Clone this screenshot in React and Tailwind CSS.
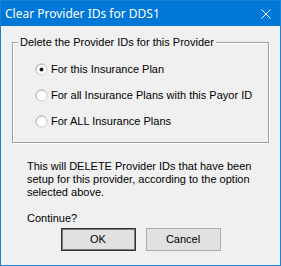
import React from "react";

function Radio({ checked }) {
  return (
    <svg width="13" height="13" viewBox="0 0 13 13" className="shrink-0">
      <defs>
        <linearGradient id="rg" x1="0" y1="0" x2="1" y2="1">
          <stop offset="0" stopColor="#8a8a8a" />
          <stop offset="1" stopColor="#dcdcdc" />
        </linearGradient>
      </defs>
      <circle cx="6.5" cy="6.5" r="5.5" fill="#ffffff" stroke="url(#rg)" strokeWidth="1" />
      {checked && <circle cx="6.5" cy="6.5" r="2" fill="#1a1a1a" />}
    </svg>
  );
}

export default function App() {
  const body = { fontFamily: '"Liberation Sans", Arial, sans-serif' };
  return (
    <div className="w-[281px] h-[266px] border border-[#1883d7] flex flex-col bg-[#f0f0f0]">
      <div
        className="h-[25px] bg-[#0078d7] flex items-center justify-between pl-[4px] pr-[9px] text-white text-[12px]"
        style={{ fontFamily: '"Noto Sans", sans-serif' }}
      >
        <span className="leading-none">Clear Provider IDs for DDS1</span>
        <svg width="10" height="10" viewBox="0 0 10 10">
          <path d="M0.5 0.5 L9.5 9.5 M9.5 0.5 L0.5 9.5" stroke="#ffffff" strokeWidth="1" />
        </svg>
      </div>
      <div className="flex-1 flex flex-col text-[11px] text-black" style={body}>
        <div className="relative ml-[11px] mt-[16px] w-[257px] h-[101px] border border-[#a0a0a0] shadow-[1px_1px_0_#ffffff,inset_1px_1px_0_#ffffff]">
          <span className="absolute -top-[7px] left-[5px] px-[2px] bg-[#f0f0f0] leading-[13px]">
            Delete the Provider IDs for this Provider
          </span>
          <div className="flex flex-col pt-[20px] pl-[22px] gap-[13px]">
            <div className="flex items-center h-[13px] gap-[3px]">
              <Radio checked />
              <span className="leading-[13px]">For this Insurance Plan</span>
            </div>
            <div className="flex items-center h-[13px] gap-[3px]">
              <Radio />
              <span className="leading-[13px]">For all Insurance Plans with this Payor ID</span>
            </div>
            <div className="flex items-center h-[13px] gap-[3px]">
              <Radio />
              <span className="leading-[13px]">For ALL Insurance Plans</span>
            </div>
          </div>
        </div>
        <div className="ml-[26px] mt-[17px] leading-[13px]">
          <p>This will DELETE Provider IDs that have been</p>
          <p>setup for this provider, according to the option</p>
          <p>selected above.</p>
          <p className="mt-[13px]">Continue?</p>
        </div>
        <div className="flex justify-center gap-[10px] mt-[3px]">
          <button className="w-[75px] h-[23px] bg-[#e1e1e1] border border-[#333333] shadow-[inset_0_0_0_1px_#7a7a7a] text-[11px] leading-none">
            OK
          </button>
          <button className="w-[75px] h-[23px] bg-[#e1e1e1] border border-[#adadad] text-[11px] leading-none">
            Cancel
          </button>
        </div>
      </div>
    </div>
  );
}
